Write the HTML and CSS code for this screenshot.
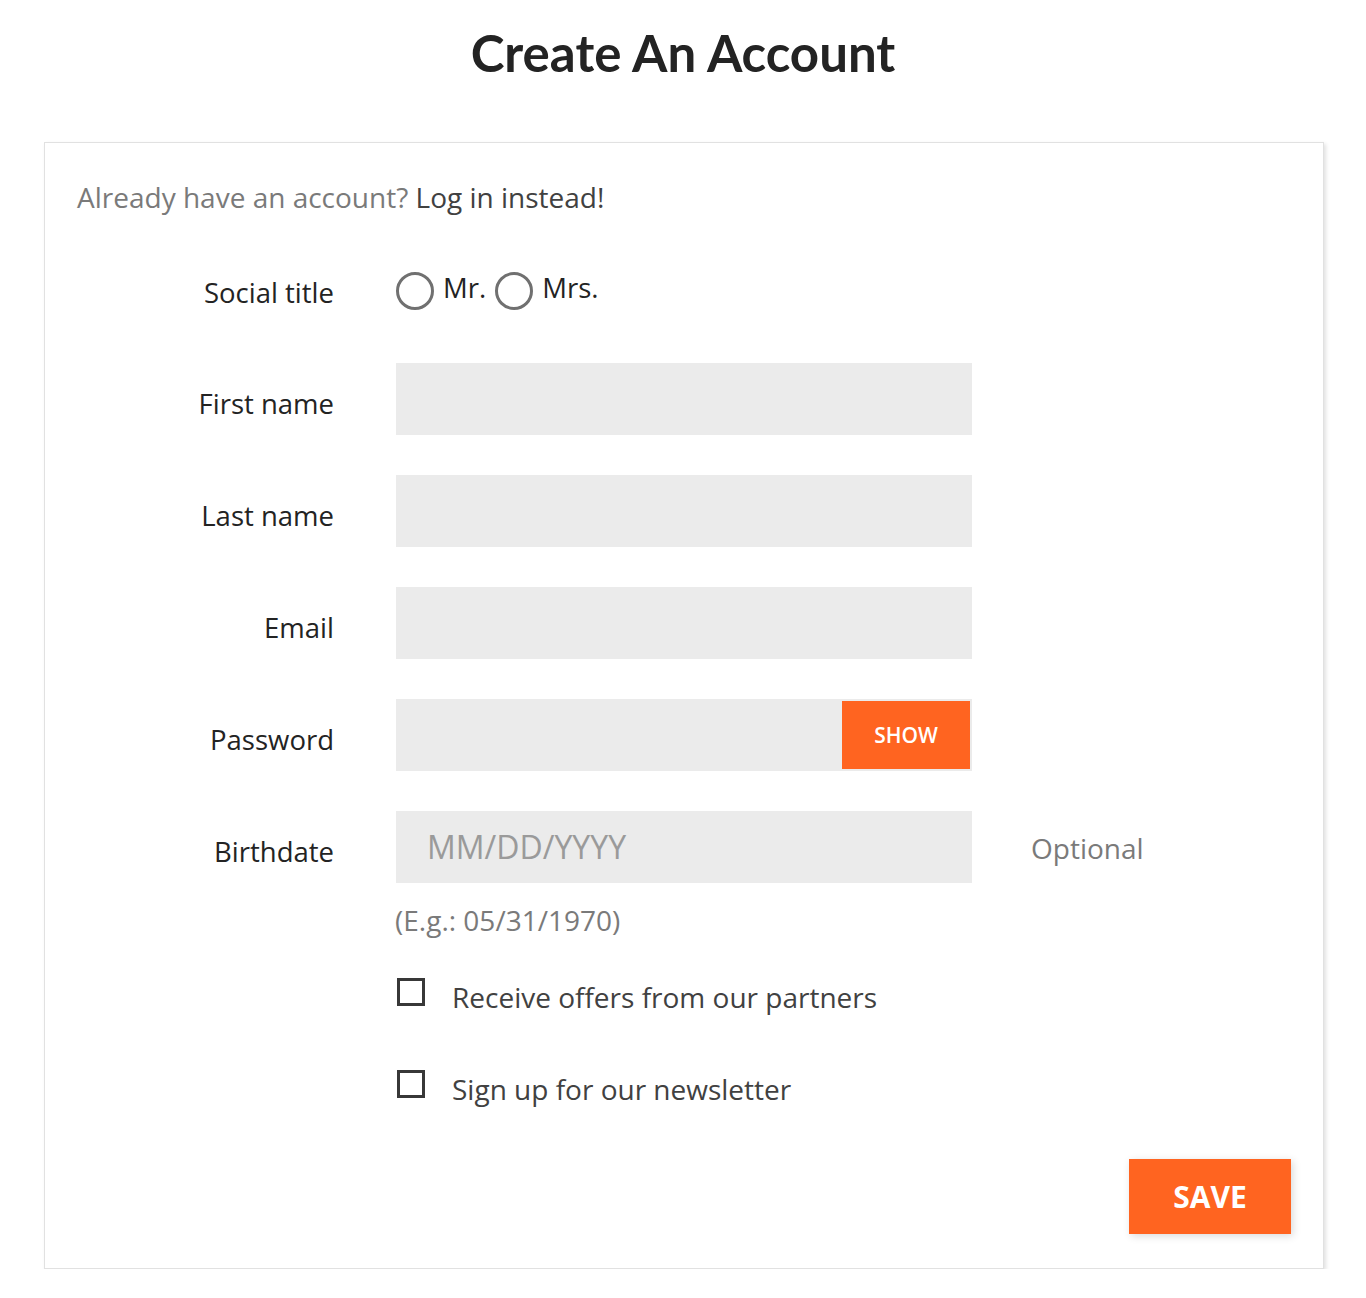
FILE: index.html
```html
<!DOCTYPE html>
<html lang="en">
<head>
<meta charset="utf-8">
<title>Create An Account</title>
<link rel="stylesheet" href="styles.css">
</head>
<body>
<h1 class="page-title">Create An Account</h1>
<section class="card">
  <p class="intro">Already have an account? <a class="login-link" href="#">Log in instead!</a></p>
  <form class="form">
    <div class="row row-social">
      <div class="label">Social title</div>
      <div class="radios">
        <label class="radio"><span class="radio-circle"></span><span class="radio-text">Mr.</span></label>
        <label class="radio"><span class="radio-circle"></span><span class="radio-text">Mrs.</span></label>
      </div>
    </div>
    <div class="row">
      <div class="label">First name</div>
      <div class="input"></div>
    </div>
    <div class="row">
      <div class="label">Last name</div>
      <div class="input"></div>
    </div>
    <div class="row">
      <div class="label">Email</div>
      <div class="input"></div>
    </div>
    <div class="row">
      <div class="label">Password</div>
      <div class="input input-group">
        <div class="input-fill"></div>
        <button type="button" class="show-btn">SHOW</button>
      </div>
    </div>
    <div class="row row-birth">
      <div class="label">Birthdate</div>
      <div class="input placeholder">MM/DD/YYYY</div>
      <div class="comment">Optional</div>
    </div>
    <div class="row-help">
      <div class="help">(E.g.: 05/31/1970)</div>
    </div>
    <div class="check-row">
      <span class="checkbox"></span><span class="check-text">Receive offers from our partners</span>
    </div>
    <div class="check-row">
      <span class="checkbox"></span><span class="check-text">Sign up for our newsletter</span>
    </div>
    <div class="footer">
      <button type="button" class="save-btn">SAVE</button>
    </div>
  </form>
</section>
</body>
</html>
```
FILE: styles.css
```css
* { box-sizing: border-box; }
html, body { margin: 0; padding: 0; background: #fff; }
body {
  font-family: "Open Sans", "Noto Sans", sans-serif;
  color: #414141;
  width: 1366px;
}
.page-title {
  margin: 0;
  padding-top: 23px;
  height: 142px;
  text-align: center;
  font-family: "Lato", "Open Sans", sans-serif;
  font-weight: 700;
  font-size: 51px;
  line-height: 60px;
  color: #232323;
}
.card {
  margin-left: 44px;
  width: 1280px;
  border: 1px solid #e1e1e1;
  box-shadow: 2px 2px 4px rgba(0,0,0,0.12);
  padding: 35px 32px 34px 32px;
}
.intro {
  margin: 0 0 39px 0;
  font-size: 28px;
  line-height: 38px;
  color: #7a7a7a;
}
.login-link { color: #414141; text-decoration: none; }
.row {
  display: grid;
  grid-template-columns: 257px 576px auto;
  column-gap: 62px;
  align-items: center;
  height: 72px;
  margin-bottom: 40px;
}
.row-social { margin-bottom: 36px; }
.label {
  text-align: right;
  font-size: 27.5px;
  line-height: 38px;
  color: #232323;
  padding-top: 9px;
}
.row-social .label { padding-top: 3px; }
.radios { display: flex; align-items: center; gap: 9px; }
.radio { display: flex; align-items: center; gap: 9px; }
.radio-circle {
  width: 38px; height: 38px;
  border: 3px solid #707070;
  border-radius: 50%;
}
.radio-text {
  font-size: 27.5px; line-height: 38px; color: #232323;
  margin-top: -7px;
}
.input {
  height: 72px;
  background: #ebebeb;
}
.input-group { display: flex; }
.input-fill { flex: 1; }
.show-btn {
  width: 128px;
  height: 68px;
  margin: 2px 2px 2px 0;
  border: 0;
  background: #ff6420;
  color: #fff;
  font-family: "Open Sans", sans-serif;
  font-weight: 600;
  font-size: 21px;
  padding: 0;
}
.placeholder {
  padding-left: 31px;
  font-size: 32px;
  line-height: 72px;
  color: #9a9a9a;
}
.comment {
  font-size: 28px;
  line-height: 38px;
  color: #7a7a7a;
  padding-top: 2px;
  margin-left: -3px;
}
.row-birth { margin-bottom: 0; }
.row-help {
  padding-left: 318px;
  height: 82px;
}
.help {
  font-size: 28px;
  line-height: 38px;
  color: #7a7a7a;
  padding-top: 18px;
}
.check-row {
  display: flex;
  align-items: center;
  padding-left: 320px;
  height: 64px;
  margin-bottom: 28px;
}
.checkbox {
  width: 28px; height: 28px;
  border: 3px solid #383838;
  margin-top: -10px;
}
.check-text {
  margin-left: 27px;
  font-size: 28px;
  line-height: 38px;
  color: #414141;
}
.footer {
  display: flex;
  justify-content: flex-end;
  margin-top: 38px;
}
.save-btn {
  width: 162px;
  height: 75px;
  border: 0;
  background: #ff6420;
  color: #fff;
  font-family: "Open Sans", sans-serif;
  font-weight: 700;
  font-size: 30px;
  box-shadow: 2px 2px 8px rgba(0,0,0,0.15);
  padding: 0;
}
```
